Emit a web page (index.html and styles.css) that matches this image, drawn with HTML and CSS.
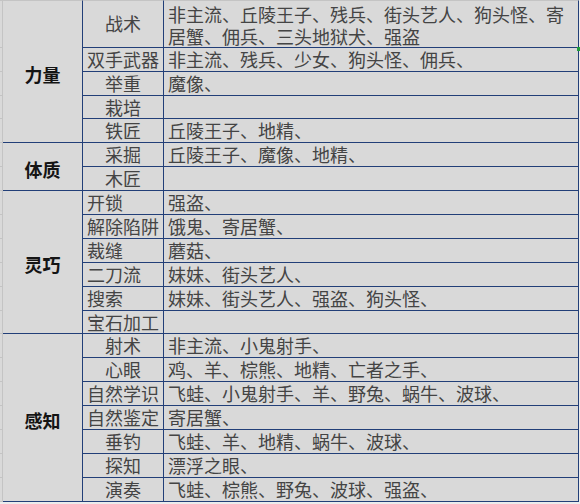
FILE: index.html
```html
<!DOCTYPE html>
<html lang="zh-CN">
<head>
<meta charset="utf-8">
<title>技能表</title>
<link rel="stylesheet" href="styles.css">
</head>
<body>
<div class="sheet">
  <!-- 力量 -->
  <div class="strip first tall"></div>
  <div class="cat first" style="grid-row: span 6">力量</div>
  <div class="skill first tall">战术</div>
  <div class="mons first tall">非主流、丘陵王子、残兵、街头艺人、狗头怪、寄<br>居蟹、佣兵、三头地狱犬、强盗</div>

  <div class="strip"></div><div class="skill">双手武器</div><div class="mons">非主流、残兵、少女、狗头怪、佣兵、</div>
  <div class="strip"></div><div class="skill">举重</div><div class="mons">魔像、</div>
  <div class="strip"></div><div class="skill">栽培</div><div class="mons"></div>
  <div class="strip"></div><div class="skill end">铁匠</div><div class="mons end">丘陵王子、地精、</div>

  <!-- 体质 -->
  <div class="strip"></div>
  <div class="cat" style="grid-row: span 2">体质</div>
  <div class="skill">采掘</div><div class="mons">丘陵王子、魔像、地精、</div>
  <div class="strip"></div><div class="skill end">木匠</div><div class="mons end"></div>

  <!-- 灵巧 -->
  <div class="strip"></div>
  <div class="cat" style="grid-row: span 6">灵巧</div>
  <div class="skill left">开锁</div><div class="mons">强盗、</div>
  <div class="strip"></div><div class="skill left">解除陷阱</div><div class="mons">饿鬼、寄居蟹、</div>
  <div class="strip"></div><div class="skill left">裁缝</div><div class="mons">蘑菇、</div>
  <div class="strip"></div><div class="skill left">二刀流</div><div class="mons">妹妹、街头艺人、</div>
  <div class="strip"></div><div class="skill left">搜索</div><div class="mons">妹妹、街头艺人、强盗、狗头怪、</div>
  <div class="strip"></div><div class="skill left end">宝石加工</div><div class="mons end"></div>

  <!-- 感知 -->
  <div class="strip"></div>
  <div class="cat" style="grid-row: span 7">感知</div>
  <div class="skill">射术</div><div class="mons">非主流、小鬼射手、</div>
  <div class="strip"></div><div class="skill">心眼</div><div class="mons">鸡、羊、棕熊、地精、亡者之手、</div>
  <div class="strip"></div><div class="skill">自然学识</div><div class="mons">飞蛙、小鬼射手、羊、野兔、蜗牛、波球、</div>
  <div class="strip"></div><div class="skill">自然鉴定</div><div class="mons">寄居蟹、</div>
  <div class="strip"></div><div class="skill">垂钓</div><div class="mons">飞蛙、羊、地精、蜗牛、波球、</div>
  <div class="strip"></div><div class="skill">探知</div><div class="mons">漂浮之眼、</div>
  <div class="strip"></div><div class="skill end">演奏</div><div class="mons end">飞蛙、棕熊、野兔、波球、强盗、</div>

  <div class="handle"></div>
</div>
</body>
</html>
```

FILE: styles.css
```css
html, body {
  margin: 0;
  padding: 0;
  background: #ececec;
}

.sheet {
  position: relative;
  display: grid;
  grid-template-columns: 3px 80px 81px 415px;
  grid-template-rows: repeat(21, 23.9px);
  background: #d9d9d9;
  width: 579px;
  font-family: "Noto Sans CJK SC", "Noto Sans CJK JP", sans-serif;
  font-size: 18px;
  color: #444444;
  line-height: 23px;
}

.sheet > div {
  box-sizing: border-box;
  white-space: nowrap;
  min-height: 0;
}

.strip {
  grid-column: 1;
  border-right: 1px solid #c4c4c4;
  border-bottom: 1px solid #c4c4c4;
}

.cat {
  grid-column: 2;
  display: flex;
  align-items: center;
  justify-content: center;
  font-weight: bold;
  color: #141414;
  border-right: 1px solid #223f78;
  border-bottom: 1px solid #223f78;
  padding-top: 5px;
}

.skill {
  grid-column: 3;
  display: flex;
  align-items: center;
  justify-content: center;
  border-right: 1px solid #223f78;
  border-bottom: 1px solid #223f78;
}

.skill.left {
  justify-content: flex-start;
  padding-left: 4px;
}

.mons {
  grid-column: 4;
  display: flex;
  align-items: center;
  padding-left: 4px;
  border-right: 1px solid #223f78;
  border-bottom: 1px solid #223f78;
}

.first {
  border-top: 1px solid #c4c4c4;
}

.tall {
  grid-row: span 2;
}

.mons.tall {
  line-height: 22px;
  padding-top: 3px;
}

.handle {
  position: absolute;
  left: 577px;
  top: 47px;
  width: 3px;
  height: 4px;
  background: #1f9d3a;
}
```
